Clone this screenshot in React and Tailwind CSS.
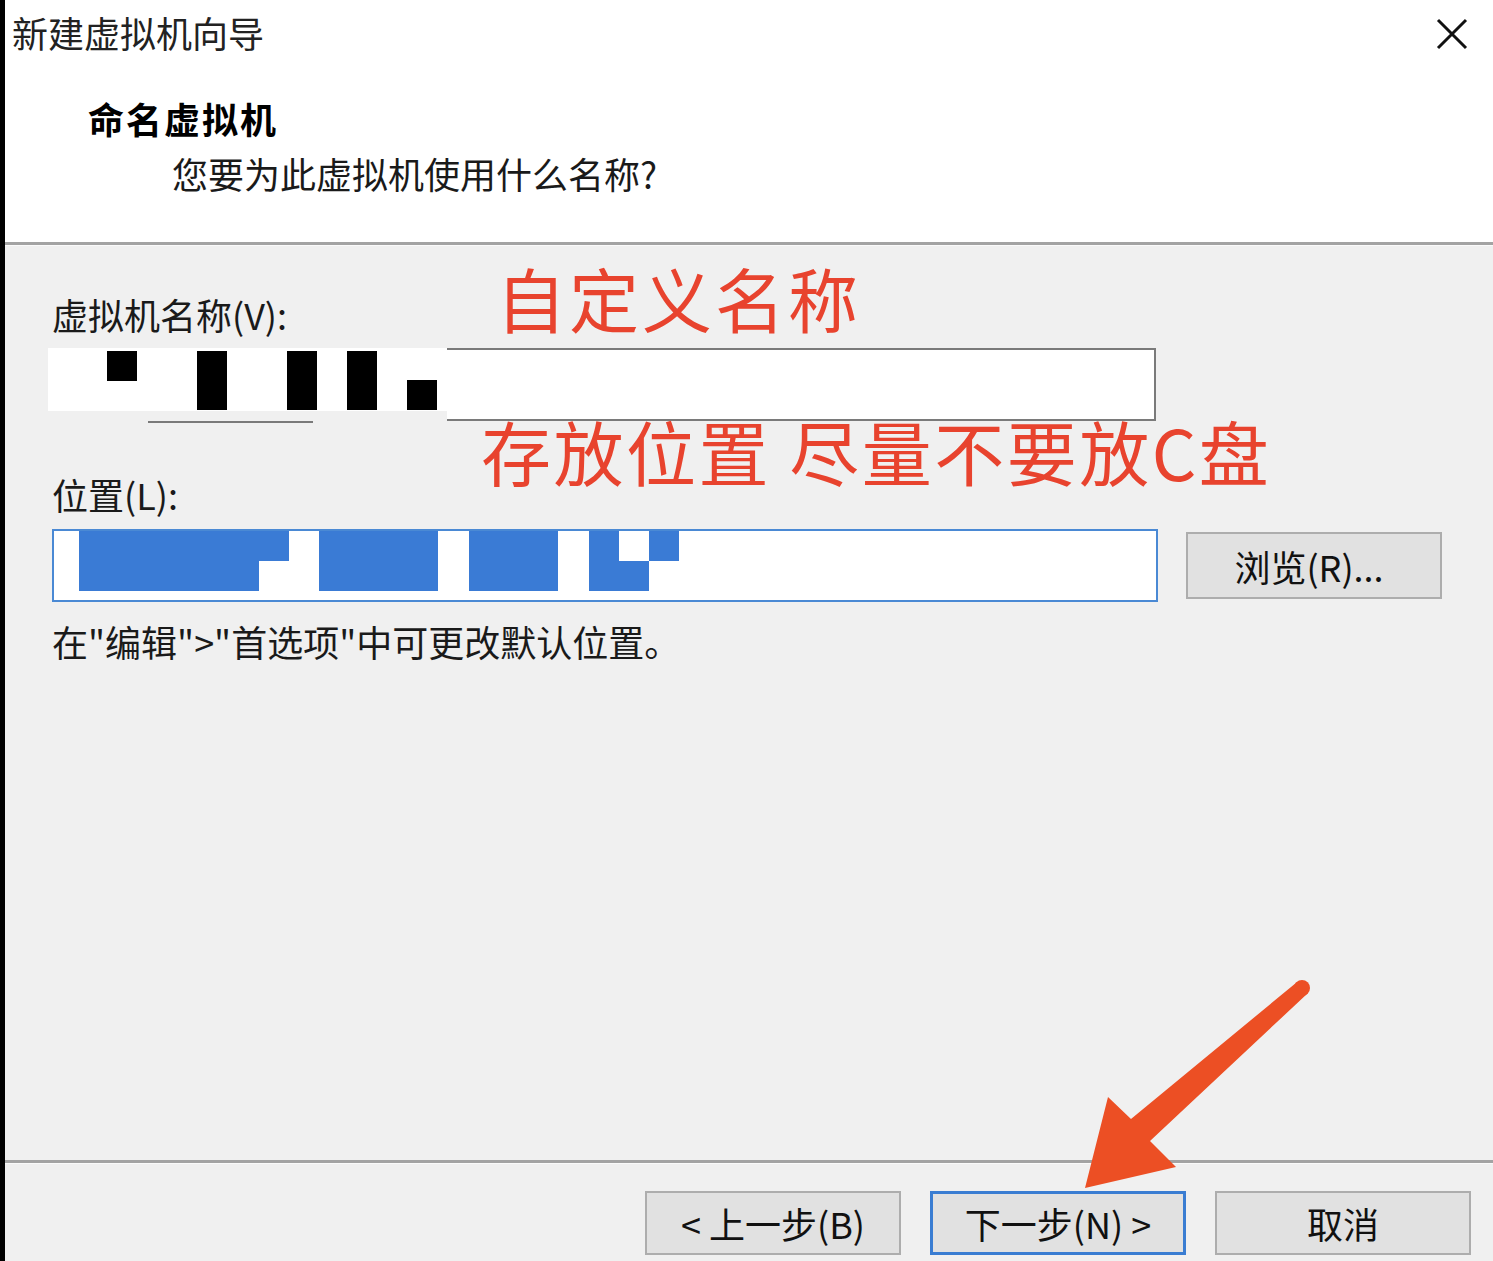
import React from "react";

const cjk = { fontFamily: '"Noto Sans CJK SC", "Microsoft YaHei", sans-serif' };

function CloseIcon() {
  return (
    <svg width="32" height="32" viewBox="0 0 32 32" className="block">
      <path d="M2 2 L30 30 M30 2 L2 30" stroke="#111" strokeWidth="3" />
    </svg>
  );
}

function Arrow() {
  return (
    <svg className="absolute left-0 top-0 pointer-events-none" width="1493" height="1261" viewBox="0 0 1493 1261">
      <circle cx="1302" cy="988" r="8" fill="#ec4f24" />
      <polygon
        fill="#ec4f24"
        points="1296.5,982.5 1131,1119 1108,1097 1085,1188 1176,1167 1150,1141 1307.5,993.5"
      />
    </svg>
  );
}

function WinButton({ children, primary }) {
  return (
    <button
      className={
        primary
          ? "w-[256px] h-[64px] bg-[#e1e1e1] border-[3px] border-[#3a7dd2] text-[36px] leading-none text-[#111]"
          : "w-[256px] h-[64px] bg-[#e1e1e1] border-2 border-[#adadad] text-[36px] leading-none text-[#111]"
      }
      style={cjk}
    >
      {children}
    </button>
  );
}

export default function App() {
  return (
    <div className="relative w-[1493px] h-[1261px] overflow-hidden flex bg-[#f0f0f0] text-[#1a1a1a]" style={cjk}>
      <div className="w-[5px] bg-black shrink-0" />
      <div className="flex-1 flex flex-col">
        {/* header */}
        <div className="h-[242px] bg-white flex flex-col">
          <div className="flex items-start justify-between pl-[7px] pr-[25px] pt-[14px]">
            <div className="text-[36px] leading-[36px] text-[#222]">新建虚拟机向导</div>
            <div className="mt-[4px]"><CloseIcon /></div>
          </div>
          <div className="pl-[83px] mt-[50px] text-[36px] leading-[36px] font-bold text-black tracking-[2px]">命名虚拟机</div>
          <div className="pl-[167px] mt-[19px] text-[36px] leading-[36px]">您要为此虚拟机使用什么名称?</div>
        </div>
        <div className="h-[3px] bg-[#a3a3a3]" />
        <div className="h-px bg-[#fafafa]" />

        {/* body */}
        <div className="flex-1 flex flex-col pl-[47px]">
          <div className="mt-[50px] text-[36px] leading-[36px]">虚拟机名称(V):</div>
          <div className="relative mt-[16px] ml-[-4px] w-[1108px] h-[73px] bg-white border-2 border-[#7a7a7a]">
            <div className="absolute left-[-2px] top-[-2px] w-[399px] h-[75px] bg-[#f0f0f0]">
              <div className="relative w-full h-[63px] bg-white">
                <div className="absolute left-[59px] top-[3px] w-[30px] h-[30px] bg-black" />
                <div className="absolute left-[149px] top-[3px] w-[30px] h-[59px] bg-black" />
                <div className="absolute left-[239px] top-[3px] w-[30px] h-[59px] bg-black" />
                <div className="absolute left-[299px] top-[3px] w-[30px] h-[59px] bg-black" />
                <div className="absolute left-[359px] top-[32px] w-[30px] h-[30px] bg-black" />
              </div>
              <div className="absolute left-[100px] bottom-0 w-[165px] h-[2px] bg-[#7a7a7a]" />
            </div>
          </div>

          <div className="mt-[55px] text-[36px] leading-[36px]">位置(L):</div>
          <div className="mt-[17px] flex items-center">
            <div className="relative w-[1106px] h-[73px] bg-white border-2 border-[#4a89d4]">
              <div className="absolute left-[25px] top-[0px] w-[180px] h-[60px] bg-[#3a7bd5]" />
              <div className="absolute left-[205px] top-[0px] w-[30px] h-[30px] bg-[#3a7bd5]" />
              <div className="absolute left-[265px] top-[0px] w-[119px] h-[60px] bg-[#3a7bd5]" />
              <div className="absolute left-[415px] top-[0px] w-[89px] h-[60px] bg-[#3a7bd5]" />
              <div className="absolute left-[535px] top-[0px] w-[30px] h-[60px] bg-[#3a7bd5]" />
              <div className="absolute left-[565px] top-[30px] w-[30px] h-[30px] bg-[#3a7bd5]" />
              <div className="absolute left-[595px] top-[0px] w-[30px] h-[30px] bg-[#3a7bd5]" />
            </div>
            <button className="ml-[28px] w-[256px] h-[67px] bg-[#e1e1e1] border-2 border-[#adadad] text-[36px] leading-none text-[#111] pr-[10px]" style={cjk}>
              浏览(R)...
            </button>
          </div>
          <div className="mt-[21px] text-[36px] leading-[36px]">在"编辑"&gt;"首选项"中可更改默认位置。</div>
        </div>

        {/* footer */}
        <div className="h-[3px] bg-[#a3a3a3]" />
        <div className="h-px bg-[#fafafa]" />
        <div className="h-[97px] flex justify-end items-start gap-[29px] pr-[22px] pt-[27px]">
          <WinButton>&lt; 上一步(B)</WinButton>
          <WinButton primary>下一步(N) &gt;</WinButton>
          <WinButton>取消</WinButton>
        </div>
      </div>

      {/* red annotations */}
      <div className="absolute left-[496px] top-[258px] text-[70px] leading-[80px] text-[#e8432e] tracking-[3px]">自定义名称</div>
      <div className="absolute left-[481px] top-[411px] text-[70px] leading-[80px] text-[#e8432e] tracking-[2.5px]">存放位置 尽量不要放C盘</div>
      <Arrow />
    </div>
  );
}
